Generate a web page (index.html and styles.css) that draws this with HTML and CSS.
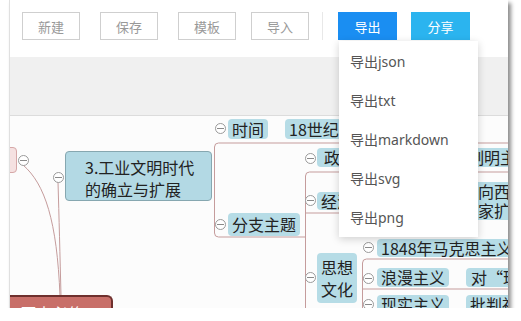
FILE: index.html
```html
<!DOCTYPE html>
<html lang="zh-CN">
<head>
<meta charset="utf-8">
<title>思维导图</title>
<link rel="stylesheet" href="styles.css">
</head>
<body>
<div class="app">
  <div class="toolbar">
    <button class="btn">新建</button>
    <button class="btn">保存</button>
    <button class="btn">模板</button>
    <button class="btn btn-import">导入</button>
    <span class="sep"></span>
    <div class="dropdown">
      <button class="btn btn-export">导出</button>
      <ul class="menu">
        <li>导出json</li>
        <li>导出txt</li>
        <li>导出markdown</li>
        <li>导出svg</li>
        <li>导出png</li>
      </ul>
    </div>
    <button class="btn btn-share">分享</button>
  </div>
  <div class="band"></div>
  <div class="canvas">
    <svg class="links" width="498" height="192" viewBox="0 0 498 192">
      <g fill="none" stroke="#c59c9c" stroke-width="1">
        <path d="M13,49 C35,68 47,105 50,180"/>
        <path d="M48,66 C49,100 50,140 51,180"/>
        <path d="M204.5,31 V117 Q204.5,121 208.5,121 H295"/>
        <path d="M204.5,31 Q204.5,27 208.5,27 H498"/>
        <path d="M295.5,60 V192"/>
        <path d="M295.5,60 Q295.5,56 299.5,56 H498"/>
        <path d="M295.5,97 H498"/>
        <path d="M352.5,147 V192"/>
        <path d="M352.5,147 Q352.5,143 356.5,143 H498"/>
        <path d="M352.5,173 H498"/>
      </g>
      <g fill="#fff" stroke="#9a9a9a" stroke-width="1">
        <circle cx="13.5" cy="44.5" r="5"/>
        <circle cx="48.5" cy="61.5" r="5"/>
        <circle cx="210.5" cy="12.5" r="5"/>
        <circle cx="210.5" cy="108.5" r="5"/>
        <circle cx="300.5" cy="42.5" r="5"/>
        <circle cx="300.5" cy="84.5" r="5"/>
        <circle cx="300.5" cy="161.5" r="5"/>
        <circle cx="358.5" cy="131.5" r="5"/>
        <circle cx="358.5" cy="162.5" r="5"/>
        <circle cx="358.5" cy="188.5" r="5"/>
      </g>
      <g stroke="#8a8a8a" stroke-width="1">
        <path d="M10,44.5 H17 M45,61.5 H52 M207,12.5 H214 M207,108.5 H214 M297,42.5 H304 M297,84.5 H304 M297,161.5 H304 M355,131.5 H362 M355,162.5 H362 M355,188.5 H362"/>
      </g>
    </svg>

    <div class="node node-pink"></div>
    <div class="node node-main">3.工业文明时代<br>的确立与扩展</div>
    <div class="node n-time">时间</div>
    <div class="node n-18">18世纪60年代—19世纪</div>
    <div class="node n-branch">分支主题</div>
    <div class="node n-zheng">政治：资产阶级代议制明主</div>
    <div class="node n-jing">经济：工业革命</div>
    <div class="node n-jing-sub">由英国向西欧和北<br>美等国家扩展</div>
    <div class="node n-sixiang">思想<br>文化</div>
    <div class="node n-1848">1848年马克思主义诞生</div>
    <div class="node n-langman">浪漫主义</div>
    <div class="node n-dui">对“理性王国”的失望</div>
    <div class="node n-xianshi">现实主义</div>
    <div class="node n-pipan">批判社会</div>
    <div class="node node-root">历史必修</div>
  </div>
</div>
</body>
</html>
```

FILE: styles.css
```css
* { box-sizing: border-box; }

body {
  margin: 0;
  background: #fff;
  font-family: "Noto Sans", "Noto Sans CJK SC", sans-serif;
}

.app {
  position: relative;
  margin-left: 9px;
  width: 499px;
  height: 308px;
  border-left: 1px solid #e0e0e0;
  box-shadow: 3px 3px 4px rgba(0, 0, 0, 0.45);
  display: flex;
  flex-direction: column;
  background: #fff;
}

.toolbar {
  height: 57px;
  flex: none;
  display: flex;
  align-items: flex-start;
  padding: 12px 0 0 12px;
  background: #fff;
  position: relative;
  z-index: 5;
}

.btn {
  width: 58px;
  height: 28px;
  margin: 0;
  padding: 0;
  border: 1px solid #cfcfcf;
  background: #fff;
  color: #999;
  font: 13px "Noto Sans CJK SC", sans-serif;
  cursor: pointer;
}

.btn + .btn { margin-left: 20px; }
.btn.btn-import { margin-left: 15px; }

.sep {
  width: 1px;
  height: 28px;
  margin-left: 13px;
  background: #e8e8e8;
}

.dropdown {
  position: relative;
  margin-left: 15px;
}

.btn-export {
  width: 59px;
  border: none;
  background: #1a8ef2;
  color: #fff;
}

.btn-share {
  width: 59px;
  margin-left: 14px;
  border: none;
  background: #2bb4ef;
  color: #fff;
}

.menu {
  position: absolute;
  top: 29px;
  left: 1px;
  width: 139px;
  margin: 0;
  padding: 1px 0 0;
  list-style: none;
  background: #fff;
  box-shadow: 0 2px 8px rgba(0, 0, 0, 0.18);
  font: 14px "Noto Sans", "Noto Sans CJK SC", sans-serif;
  color: #555;
}

.menu li {
  height: 39px;
  line-height: 39px;
  padding-left: 11px;
}

.band {
  height: 59px;
  flex: none;
  background: #f0f0f0;
  border-bottom: 1px solid #dcdcdc;
}

.canvas {
  position: relative;
  flex: 1;
  background: #fcfcfc;
  overflow: hidden;
}

.links {
  position: absolute;
  left: 0;
  top: 0;
}

.node {
  position: absolute;
  white-space: nowrap;
  font: 16px/20px "Noto Sans CJK SC", sans-serif;
  color: #222;
  background: #b6dce6;
  border-radius: 4px;
  padding: 0 4px;
}

.node-pink {
  left: -20px;
  top: 31px;
  width: 27px;
  height: 26px;
  background: #f5e1e1;
  border: 1px solid #d6a8a8;
}

.node-main {
  left: 55px;
  top: 35px;
  width: 147px;
  height: 50px;
  padding: 4px 0 0 19px;
  line-height: 22px;
  background: #b3d9e4;
  border: 1px solid #86a7b0;
}

.n-time { left: 218px; top: 3px; height: 20px; }
.n-18 { left: 275px; top: 3px; height: 20px; }
.n-branch { left: 218px; top: 97px; height: 23px; line-height: 23px; }
.n-zheng { left: 307px; top: 32px; height: 19px; line-height: 19px; padding-left: 7px; }
.n-jing { left: 307px; top: 76px; height: 18px; line-height: 18px; }
.n-jing-sub { left: 416px; top: 66px; height: 38px; line-height: 19px; }
.n-sixiang { left: 307px; top: 137px; height: 50px; padding: 3px 4px; line-height: 22px; }
.n-1848 { left: 367px; top: 123px; height: 18px; line-height: 18px; }
.n-langman { left: 367px; top: 152px; height: 19px; line-height: 19px; }
.n-dui { left: 456px; top: 152px; height: 19px; line-height: 19px; padding-left: 5px; }
.n-xianshi { left: 367px; top: 179px; height: 19px; line-height: 19px; }
.n-pipan { left: 456px; top: 179px; height: 19px; line-height: 19px; }

.node-root {
  left: 0;
  top: 179px;
  width: 103px;
  height: 30px;
  padding: 5px 0 0 10px;
  line-height: 22px;
  color: #fff;
  background: #c86f69;
  border-top: 2px solid #6e302d;
  border-right: 2px solid #6e302d;
  border-radius: 0 6px 0 0;
}
```
